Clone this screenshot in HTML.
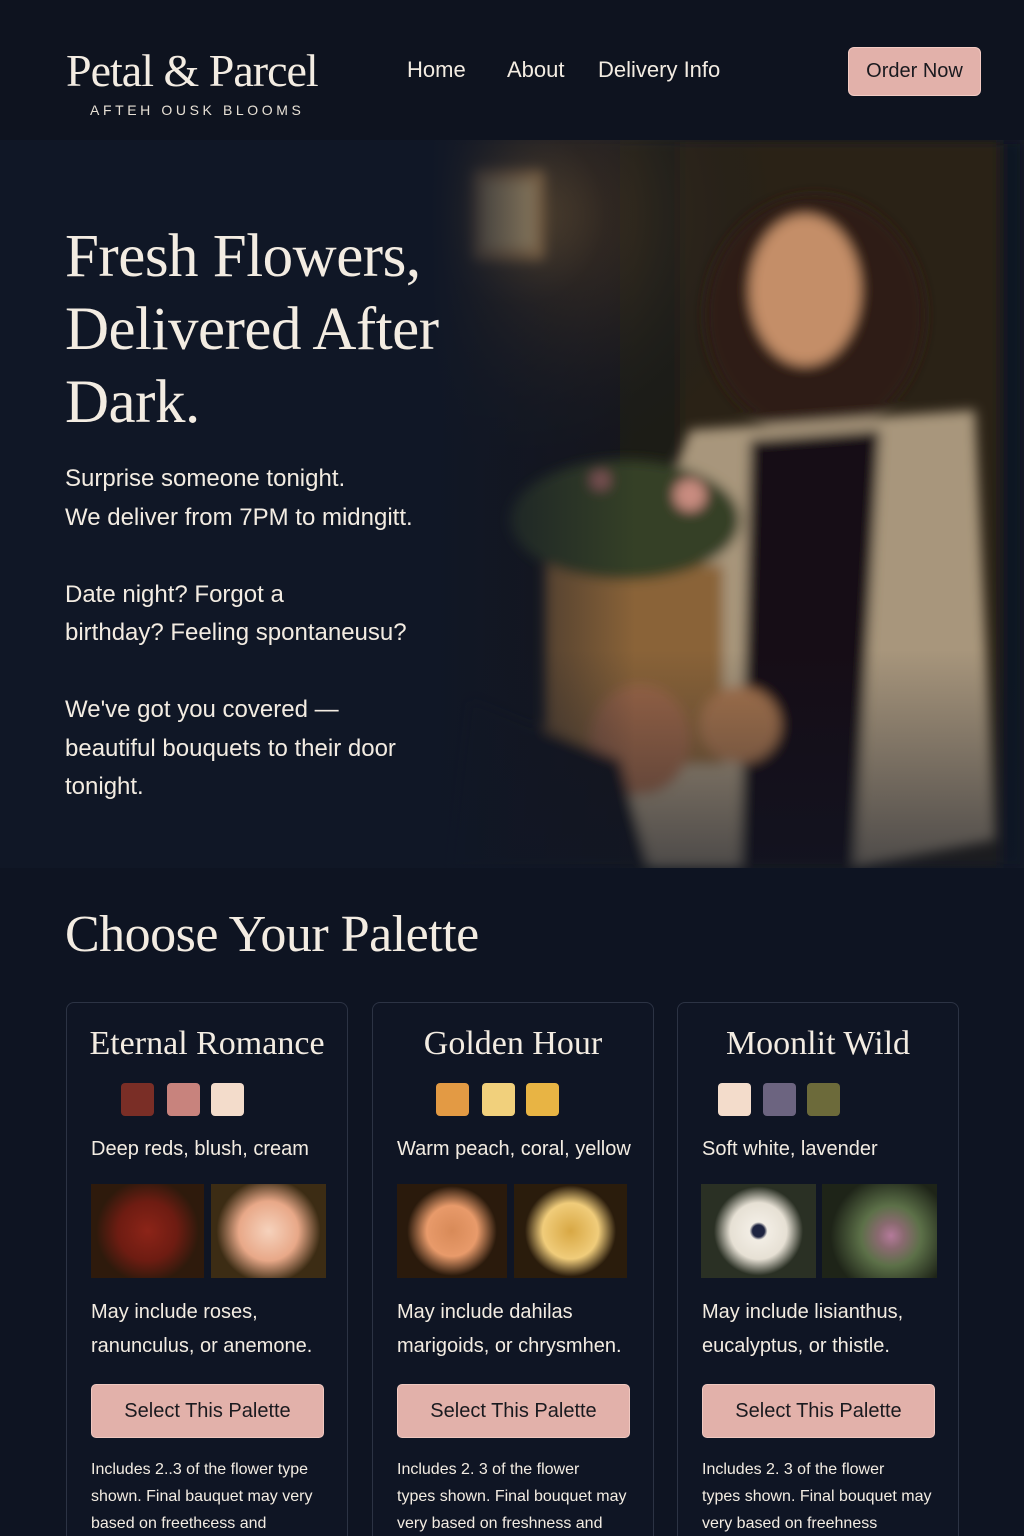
<!DOCTYPE html>
<html style="width:1024px;height:1536px;overflow:hidden"><head><meta charset="utf-8"><style>
*{margin:0;padding:0;box-sizing:border-box}
body{width:1024px;height:1536px;overflow:hidden;background:#0e1320;font-family:"Liberation Sans",sans-serif;color:#f3ece2;position:relative}
.serif{font-family:"Liberation Serif",serif}
.abs{position:absolute}
.nav a{position:absolute;top:57px;font-size:22px;color:#f3ece2;text-decoration:none}
.card{position:absolute;top:1002px;width:282px;height:560px;border:1px solid #2c3344;border-radius:8px;background:#0f1524}
.card h3{position:absolute;top:22px;left:0;width:100%;font-family:"Liberation Serif",serif;font-weight:normal;font-size:34px;text-align:center;color:#f3ece2}
.sw{position:absolute;top:80px;width:33px;height:33px;border-radius:4px}
.sub{position:absolute;top:135px;left:24px;font-size:20px;white-space:nowrap}
.img{position:absolute;top:181px;width:113px;height:94px;overflow:hidden}
.may{position:absolute;top:292px;left:24px;font-size:20px;line-height:34px;width:260px}
.btn{position:absolute;top:381px;left:24px;width:233px;height:54px;background:#e2b1aa;border:1px solid #f0c8c0;border-radius:5px;color:#1a1a1f;font-size:20px;text-align:center;line-height:52px}
.fine{position:absolute;top:453px;left:24px;font-size:16px;line-height:27px;width:235px}
</style></head><body>
<div class="abs" style="left:0;top:0;width:1024px;height:140px;background:#0e131f"></div>
<div class="abs serif" style="left:66px;top:44px;font-size:46px;color:#f3ece2;letter-spacing:-1px">Petal &amp; Parcel</div>
<div class="abs" style="left:90px;top:102px;font-size:14px;letter-spacing:3.6px;color:#e8e1d6">AFTEH OUSK BLOOMS</div>
<div class="nav"><a style="left:407px">Home</a><a style="left:507px">About</a><a style="left:598px">Delivery Info</a></div>
<div class="abs" style="left:848px;top:47px;width:133px;height:49px;background:#e2b1aa;border:1px solid #f3cbc3;border-radius:6px;color:#1a1a1f;font-size:20px;text-align:center;line-height:47px">Order Now</div>

<!-- hero -->
<div class="abs" style="left:0;top:140px;width:1024px;height:728px;background:#101726;overflow:hidden">
<svg width="1024" height="728" style="position:absolute;left:0;top:0">
<defs>
<radialGradient id="glow" cx="515" cy="75" r="260" gradientUnits="userSpaceOnUse"><stop offset="0" stop-color="#a07840" stop-opacity=".9"/><stop offset=".35" stop-color="#4a3824" stop-opacity=".6"/><stop offset="1" stop-color="#101726" stop-opacity="0"/></radialGradient>
<linearGradient id="fade" x1="0" x2="1"><stop offset="0" stop-color="#101726"/><stop offset=".42" stop-color="#101726"/><stop offset=".62" stop-color="#101726" stop-opacity="0"/></linearGradient>
<linearGradient id="bot" x1="0" y1="0" x2="0" y2="1"><stop offset=".7" stop-color="#101726" stop-opacity="0"/><stop offset="1" stop-color="#101726" stop-opacity=".6"/></linearGradient>
<filter id="b"><feGaussianBlur stdDeviation="6"/></filter>
</defs>
<g filter="url(#b)">
<rect x="400" y="0" width="624" height="728" fill="#15151a"/>
<rect x="620" y="0" width="60" height="728" fill="#1e1a16"/>
<rect x="680" y="0" width="320" height="728" fill="#2a2016"/>
<rect x="1000" y="0" width="24" height="728" fill="#101420"/>
</g>
<rect x="0" y="0" width="1024" height="728" fill="url(#glow)"/>
<g filter="url(#b)">
<rect x="472" y="30" width="72" height="90" rx="6" fill="#c8965a"/>
<rect x="482" y="42" width="52" height="66" fill="#f0cc8c"/>
<ellipse cx="815" cy="175" rx="110" ry="120" fill="#2e1a12"/>
<ellipse cx="805" cy="150" rx="55" ry="75" fill="#c48e68"/>
<path d="M690 290 L975 270 L995 700 L850 728 L620 728 L630 450 Z" fill="#a8967c"/>
<path d="M750 300 L880 290 L855 728 L740 728 Z" fill="#121116"/>
<rect x="545" y="425" width="178" height="200" fill="#8a6438"/>
<ellipse cx="625" cy="380" rx="115" ry="60" fill="#344026"/>
<circle cx="690" cy="355" r="16" fill="#c98c80"/>
<circle cx="600" cy="340" r="10" fill="#8c5a5a"/>
<ellipse cx="640" cy="600" rx="50" ry="55" fill="#9c6646"/>
<ellipse cx="740" cy="585" rx="40" ry="38" fill="#a8744e"/>
<path d="M470 560 L620 620 L650 728 L450 728 Z" fill="#13161e"/>
</g>
<rect x="0" y="0" width="1024" height="728" fill="url(#fade)"/>
<rect x="0" y="0" width="1024" height="728" fill="url(#bot)"/>
</svg>
<div class="abs serif" style="left:65px;top:80px;font-size:61px;line-height:73px;color:#f3ece2;letter-spacing:-0.5px">Fresh Flowers,<br>Delivered After<br>Dark.</div>
<div class="abs" style="left:65px;top:320px;font-size:24px;line-height:38.5px;color:#f3ece2">Surprise someone tonight.<br>We deliver from 7PM to midngitt.<br><br>Date night? Forgot a<br>birthday? Feeling spontaneusu?<br><br>We've got you covered —<br>beautiful bouquets to their door<br>tonight.</div>
</div>

<div class="abs" style="left:0;top:868px;width:1024px;height:668px;background:#0e1422"></div>
<div class="abs serif" style="left:65px;top:905px;font-size:52px;color:#f3ece2;letter-spacing:-0.5px">Choose Your Palette</div>

<div class="card" style="left:66px">
<h3>Eternal Romance</h3>
<div class="sw" style="left:54px;background:#7a2e26"></div><div class="sw" style="left:100px;background:#c8837d"></div><div class="sw" style="left:144px;background:#f3dccb"></div>
<div class="sub">Deep reds, blush, cream</div>
<div class="img" style="left:24px;background:radial-gradient(circle at 50% 50%,#8c2418 0,#6e1c12 40%,#2e1a0c 70%)"></div>
<div class="img" style="left:144px;width:115px;background:radial-gradient(circle at 50% 50%,#f6d2bc 0,#e8a888 40%,#3c2c14 70%)"></div>
<div class="may">May include roses,<br>ranunculus, or anemone.</div>
<div class="btn">Select This Palette</div>
<div class="fine">Includes 2..3 of the flower type shown. Final bauquet may very based on freethєess and</div>
</div>

<div class="card" style="left:372px">
<h3>Golden Hour</h3>
<div class="sw" style="left:63px;background:#e39a44"></div><div class="sw" style="left:109px;background:#f1d07c"></div><div class="sw" style="left:153px;background:#e8b444"></div>
<div class="sub">Warm peach, coral, yellow</div>
<div class="img" style="left:24px;width:110px;background:radial-gradient(circle at 50% 50%,#d88a58 0,#e89a6a 35%,#2a1a0c 62%)"></div>
<div class="img" style="left:141px;background:radial-gradient(circle at 50% 50%,#d8a844 0,#f0cc7a 38%,#2a1c0c 62%)"></div>
<div class="may">May include dahilas<br>marigoids, or chrysmhen.</div>
<div class="btn">Select This Palette</div>
<div class="fine">Includes 2. 3 of the flower<br>types shown. Final bouquet may very based on freshness and</div>
</div>

<div class="card" style="left:677px">
<h3>Moonlit Wild</h3>
<div class="sw" style="left:40px;background:#f3dccb"></div><div class="sw" style="left:85px;background:#6c6480"></div><div class="sw" style="left:129px;background:#6c6a3a"></div>
<div class="sub">Soft white, lavender</div>
<div class="img" style="left:23px;width:115px;background:radial-gradient(circle at 50% 50%,#1e2440 0,#1e2440 8%,#f2ede4 12%,#e6e0d4 38%,#2a3024 60%)"></div>
<div class="img" style="left:144px;width:115px;background:radial-gradient(circle at 60% 55%,#b47a9a 0,#8a6a70 15%,#5c7048 35%,#1e2418 70%)"></div>
<div class="may">May include lisianthus,<br>eucalyptus, or thistle.</div>
<div class="btn">Select This Palette</div>
<div class="fine">Includes 2. 3 of the flower<br>types shown. Final bouquet may very based on freehness</div>
</div>
</body></html>
